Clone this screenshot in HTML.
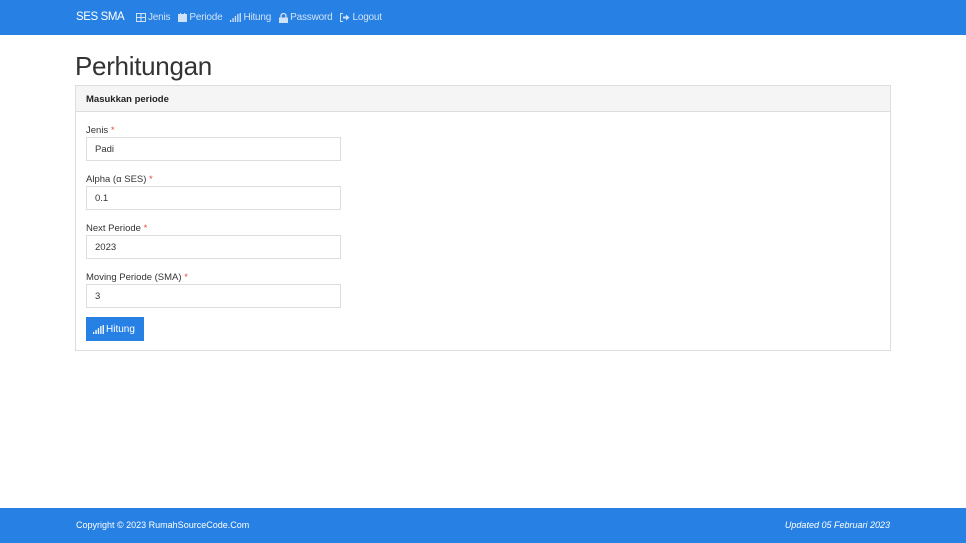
<!DOCTYPE html>
<html><head><meta charset="utf-8"><style>
*{box-sizing:border-box;margin:0;padding:0}
body{width:966px;height:543px;position:relative;font-family:"Liberation Sans",sans-serif;font-size:10px;color:#333;background:#fff;overflow:hidden}
.nav{position:absolute;left:0;top:0;width:966px;height:35px;background:#2780e3;color:#fff}
.brand{position:absolute;left:76px;top:11px;font-size:11.5px;letter-spacing:-0.4px}
.links{position:absolute;left:136px;top:12px;font-size:10px;color:#cfe2f8;display:flex;gap:8px;letter-spacing:-0.2px}
.links span{display:flex;align-items:center;gap:2px}
h1{position:absolute;left:75px;top:51px;font-size:26px;font-weight:300;color:#333;letter-spacing:-0.3px}
.panel{position:absolute;left:75px;top:85px;width:816px;height:266px;border:1px solid #ddd}
.ph{height:26px;background:#f5f5f5;border-bottom:1px solid #ddd;font-weight:bold;font-size:9.5px;padding:8px 10px;color:#222}
.lbl{position:absolute;left:10px;font-size:9.5px;color:#333}
.lbl b{color:#e74c3c;font-weight:normal}
.in{position:absolute;left:10px;width:255px;height:24px;border:1px solid #ddd;font-size:9.5px;padding:6px 8px;color:#333}
.btn{position:absolute;left:10px;top:231px;width:58px;height:24px;background:#2780e3;color:#fff;font-size:10px;padding:6px 7px;display:flex;align-items:center;gap:2px}
.foot{position:absolute;left:0;top:508px;width:966px;height:35px;background:#2780e3;color:#fff;font-size:9px}
.foot .l{position:absolute;left:76px;top:12px}
.foot .r{position:absolute;right:76px;top:12px;font-style:italic}
</style></head><body>
<div class="nav"><div class="brand">SES SMA</div>
<div class="links">
<span><svg width="10" height="9" viewBox="0 0 10 9"><rect x=".5" y=".5" width="9" height="8" fill="none" stroke="#cfe2f8"/><path d="M5 0v9M0 4.5h10" stroke="#cfe2f8"/></svg>Jenis</span>
<span><svg width="9" height="9" viewBox="0 0 9 9"><rect x="0" y="1" width="9" height="8" fill="#cfe2f8"/><rect x="2" y="0" width="1" height="2" fill="#cfe2f8"/><rect x="6" y="0" width="1" height="2" fill="#cfe2f8"/></svg>Periode</span>
<span><svg width="11" height="9" viewBox="0 0 11 9"><rect x="0" y="7" width="1.3" height="2" fill="#cfe2f8"/><rect x="2.4" y="5" width="1.3" height="4" fill="#cfe2f8"/><rect x="4.8" y="3" width="1.3" height="6" fill="#cfe2f8"/><rect x="7.2" y="1" width="1.3" height="8" fill="#cfe2f8"/><rect x="9.6" y="0" width="1.3" height="9" fill="#cfe2f8"/></svg>Hitung</span>
<span><svg width="9" height="10" viewBox="0 0 9 10"><path d="M2 4.5V3a2.5 2.5 0 0 1 5 0v1.5" fill="none" stroke="#cfe2f8" stroke-width="1.3"/><rect x="0" y="4.5" width="9" height="5.5" fill="#cfe2f8"/></svg>Password</span>
<span><svg width="10" height="9" viewBox="0 0 10 9"><path d="M3 .5H.5v8H3" fill="none" stroke="#cfe2f8"/><path d="M3 3.5h3V1.5L9.5 4.5 6 7.5v-2H3z" fill="#cfe2f8"/></svg>Logout</span>
</div></div>
<h1>Perhitungan</h1>
<div class="panel"><div class="ph">Masukkan periode</div>
<div class="lbl" style="top:39px">Jenis <b>*</b></div><div class="in" style="top:51px">Padi</div>
<div class="lbl" style="top:88px">Alpha (α SES) <b>*</b></div><div class="in" style="top:100px">0.1</div>
<div class="lbl" style="top:137px">Next Periode <b>*</b></div><div class="in" style="top:149px">2023</div>
<div class="lbl" style="top:186px">Moving Periode (SMA) <b>*</b></div><div class="in" style="top:198px">3</div>
<div class="btn"><svg width="11" height="9" viewBox="0 0 11 9"><rect x="0" y="7" width="1.3" height="2" fill="#fff"/><rect x="2.4" y="5" width="1.3" height="4" fill="#fff"/><rect x="4.8" y="3" width="1.3" height="6" fill="#fff"/><rect x="7.2" y="1" width="1.3" height="8" fill="#fff"/><rect x="9.6" y="0" width="1.3" height="9" fill="#fff"/></svg>Hitung</div>
</div>
<div class="foot"><div class="l">Copyright © 2023 RumahSourceCode.Com</div><div class="r">Updated 05 Februari 2023</div></div>
</body></html>
